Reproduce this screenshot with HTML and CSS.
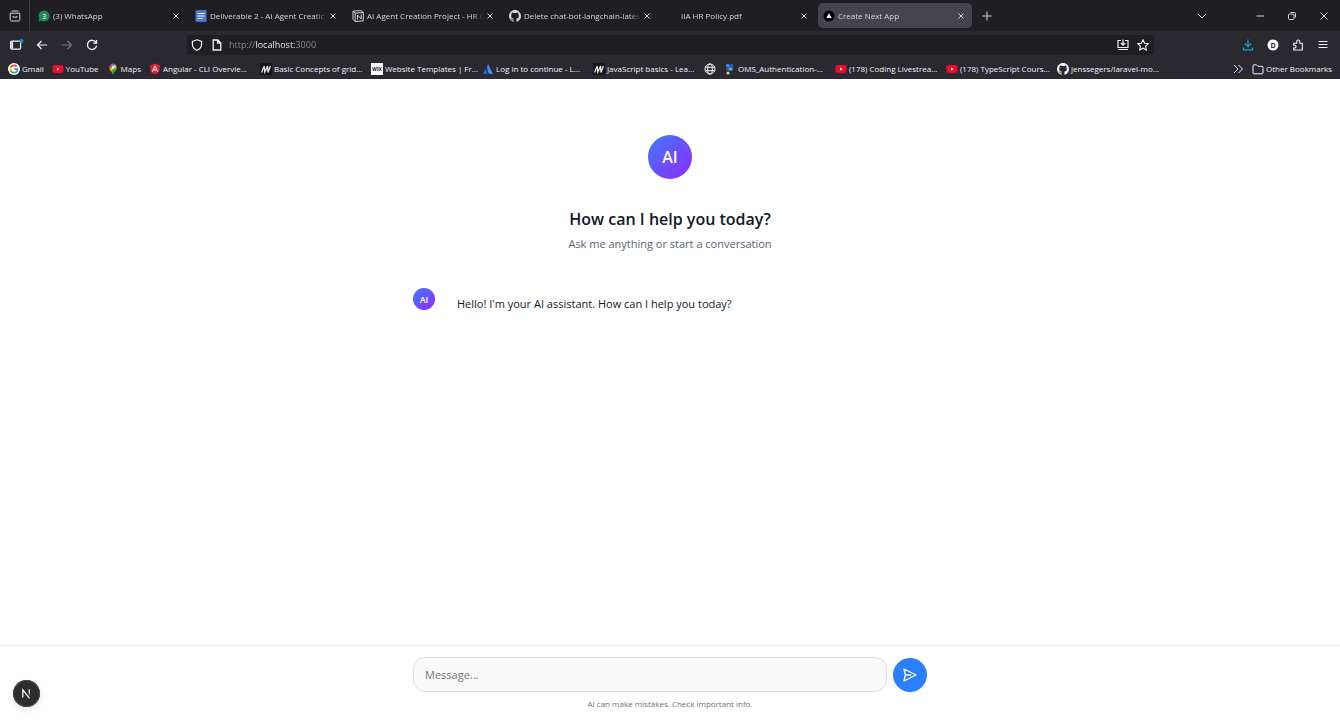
FILE: index.html
```html
<!DOCTYPE html>
<html lang="en">
<head>
    <meta charset="UTF-8">
    <meta name="viewport" content="width=device-width, initial-scale=1.0">
    <title>Create Next App</title>
    <link rel="stylesheet" href="styles.css">
</head>
<body>
    <!-- shared icons -->
    <svg class="sprite" aria-hidden="true">
        <symbol id="close" viewBox="0 0 12 12"><path d="M3.5 3.5l5 5M8.5 3.5l-5 5" /></symbol>
        <symbol id="youtube" viewBox="0 0 12 12"><rect x="0.5" y="2" width="11" height="8" rx="2" fill="#f00a2c" stroke="none" /><path d="M5 4.4v3.2L7.6 6z" fill="#fff" stroke="none" /></symbol>
        <symbol id="mdn" viewBox="0 0 12 12"><rect width="12" height="12" fill="#17171b" stroke="none" /><path d="M1.6 9.5L4.2 3l.6 6.2L7.6 3l.4 6.5L10.4 3" stroke="#eee" stroke-width="1.2" /></symbol>
        <symbol id="github" viewBox="0 0 16 16"><path stroke="none" fill="currentColor" d="M8 0C3.58 0 0 3.58 0 8c0 3.54 2.29 6.53 5.47 7.59.4.07.55-.17.55-.38 0-.19-.01-.82-.01-1.49-2.01.37-2.53-.49-2.69-.94-.09-.23-.48-.94-.82-1.13-.28-.15-.68-.52-.01-.53.63-.01 1.08.58 1.23.82.72 1.21 1.87.87 2.33.66.07-.52.28-.87.51-1.07-1.78-.2-3.64-.89-3.64-3.95 0-.87.31-1.59.82-2.15-.08-.2-.36-1.02.08-2.12 0 0 .67-.21 2.2.82.64-.18 1.32-.27 2-.27s1.36.09 2 .27c1.53-1.04 2.2-.82 2.2-.82.44 1.1.16 1.92.08 2.12.51.56.82 1.27.82 2.15 0 3.07-1.87 3.75-3.65 3.95.29.25.54.73.54 1.48 0 1.07-.01 1.93-.01 2.2 0 .21.15.46.55.38A8.01 8.01 0 0016 8c0-4.42-3.58-8-8-8z" /></symbol>
    </svg>

    <header class="browser">
        <div class="tab-bar">
            <button class="view-btn" aria-label="Recent browsing">
                <svg class="icon" viewBox="0 0 12 12"><path d="M2.5 1h7M1.2 3.2h9.6M1.2 3.2v6.3q0 1.5 1.5 1.5h6.6q1.5 0 1.5-1.5V3.2M4.2 6v1.2h3.6V6" /></svg>
            </button>
            <div class="tabs">
                <div class="tab">
                    <svg class="icon" viewBox="0 0 12 12"><path d="M6 .5a5.5 5.5 0 1 1-2.8 10.2L.5 11.5l.8-2.8A5.5 5.5 0 0 1 6 .5z" fill="#1f8a54" stroke="none" /><text class="badge-num" x="6" y="8.7">3</text></svg>
                    <button class="tab-title">(3) WhatsApp</button>
                    <button class="tab-close" aria-label="Close tab"><svg class="icon"><use href="#close" /></svg></button>
                </div>
                <div class="tab">
                    <svg class="icon" viewBox="0 0 12 12"><rect x="0.5" width="11" height="12" rx="1" fill="#4a76d0" stroke="none" /><path d="M2.5 3.5h7M2.5 6h7M2.5 8.5h5" stroke="#fff" /></svg>
                    <button class="tab-title">Deliverable 2 - AI Agent Creatic</button>
                    <button class="tab-close" aria-label="Close tab"><svg class="icon"><use href="#close" /></svg></button>
                </div>
                <div class="tab">
                    <svg class="icon" viewBox="0 0 12 12"><path d="M1 1.2l7.8-.6 2.5 1.9v8.3l-8.1.7L1 9.3z" /><path d="M1 1.2l2.2 2 8.1-.6M3.2 3.2v8.3" /><path d="M5.5 9.500V5l3.700 4V4.500" /></svg>
                    <button class="tab-title">AI Agent Creation Project - HR C</button>
                    <button class="tab-close" aria-label="Close tab"><svg class="icon"><use href="#close" /></svg></button>
                </div>
                <div class="tab">
                    <svg class="icon"><use href="#github" /></svg>
                    <button class="tab-title">Delete chat-bot-langchain-lates</button>
                    <button class="tab-close" aria-label="Close tab"><svg class="icon"><use href="#close" /></svg></button>
                </div>
                <div class="tab">
                    <span class="icon"></span>
                    <button class="tab-title">IIA HR Policy.pdf</button>
                    <button class="tab-close" aria-label="Close tab"><svg class="icon"><use href="#close" /></svg></button>
                </div>
                <div class="tab active">
                    <svg class="icon" viewBox="0 0 12 12"><circle cx="6" cy="6" r="5.5" fill="#000" stroke="none" /><path d="M6 3.3L8.700 8H3.300z" fill="#fff" stroke="none" /></svg>
                    <button class="tab-title">Create Next App</button>
                    <button class="tab-close" aria-label="Close tab"><svg class="icon"><use href="#close" /></svg></button>
                </div>
                <button class="new-tab" aria-label="New tab"><svg class="icon" viewBox="0 0 12 12"><path d="M6 1.5v9M1.5 6h9" /></svg></button>
            </div>
            <div class="window-controls">
                <button class="list-tabs" aria-label="List all tabs"><svg class="icon" viewBox="0 0 12 12"><path d="M2 4l4 4 4-4" /></svg></button>
                <button aria-label="Minimize"><svg class="icon" viewBox="0 0 12 12"><path d="M2.5 6h7.500" /></svg></button>
                <button aria-label="Restore"><svg class="icon" viewBox="0 0 12 12"><rect x="2.5" y="4" width="5.5" height="5.5" rx="1" /><path d="M4.5 2.5h4q1 0 1 1v4" /></svg></button>
                <button aria-label="Close"><svg class="icon" viewBox="0 0 12 12"><path d="M2.5 2.5l7 7M9.5 2.5l-7 7" /></svg></button>
            </div>
        </div>

        <div class="nav-bar">
            <div class="nav-buttons">
                <button aria-label="Sidebar"><svg class="icon wide" viewBox="0 0 15 12"><rect x="1.6" y="2.1" width="10" height="8" rx="1.200" stroke-width="1.2" /><path d="M3.200 3v6.500" stroke-width="1.800" /><circle cx="12.500" cy="2" r="2" fill="#1693e0" stroke="none" /></svg></button>
                <button aria-label="Back"><svg class="icon" viewBox="0 0 12 12"><path d="M11 6H1.5M5.500 2l-4 4 4 4" stroke-width="1.2" /></svg></button>
                <button class="disabled" aria-label="Forward" disabled><svg class="icon" viewBox="0 0 12 12"><path d="M1 6h9.5M6.5 2l4 4-4 4" stroke-width="1.2" /></svg></button>
                <button aria-label="Reload"><svg class="icon" viewBox="0 0 12 12"><path d="M10 3.5A4.600 4.600 0 1 0 10.600 6.500M10.500 1v3.200H7.300" stroke-width="1.3" /></svg></button>
            </div>
            <div class="url-bar">
                <svg class="icon" viewBox="0 0 12 12"><path d="M6 .8l4.600 1.700v2.700c0 2.800-1.800 5-4.600 6.100-2.800-1.100-4.600-3.300-4.600-6.100V2.500z" stroke-width="1.2" /></svg>
                <svg class="icon" viewBox="0 0 12 12"><path d="M2.200 1h4.600l3 3v7H2.200zM6.600 1v3.200h3.200" stroke-width="1.3" /></svg>
                <input class="url" type="text" aria-label="Address" value="http://localhost:3000">
                <button aria-label="Install"><svg class="icon" viewBox="0 0 12 12"><path d="M4 1.500H1v7h10v-7H8M6 .5v5.500M3.800 4L6 6.200 8.200 4M1 10.500h10" stroke-width="1.2" /></svg></button>
                <button aria-label="Bookmark"><svg class="icon" viewBox="0 0 12 12"><path d="M6 .8l1.600 3.400 3.700.5-2.700 2.600.7 3.700L6 9.200 2.700 11l.7-3.700L.7 4.700l3.700-.5z" stroke-width="1.1" /></svg></button>
            </div>
            <div class="nav-tools">
                <button class="download" aria-label="Downloads"><svg class="icon" viewBox="0 0 12 12"><path d="M6 .5v7M2.800 4.500L6 7.700l3.200-3.200M1.500 8.500v2.300h9V8.500" stroke-width="1.2" /></svg></button>
                <button aria-label="Account"><svg class="icon" viewBox="0 0 12 12"><circle cx="6" cy="6" r="5.5" fill="#fff" stroke="none" /><text class="account-letter" x="6" y="8.500">D</text></svg></button>
                <button aria-label="Extensions"><svg class="icon" viewBox="0 0 12 12"><path d="M1.700 4.200h3V2.500a1.500 1.500 0 0 1 3 0v1.700h2.600V11H1.700V9h1.300a1.400 1.400 0 0 0 0-2.700H1.700z" stroke-width="1.1" /></svg></button>
                <button aria-label="Menu"><svg class="icon" viewBox="0 0 12 12"><path d="M1.500 2.500h9M1.500 5.500h9M1.500 8.500h9" /></svg></button>
            </div>
        </div>

        <nav class="bookmarks">
            <a href="#"><svg class="icon" viewBox="0 0 12 12"><circle cx="6" cy="6" r="6" fill="#fff" stroke="none" /><g stroke-width="1.700"><path d="M8.700 3.600A3.600 3.600 0 0 0 2.900 4.200" stroke="#ea4335" /><path d="M2.900 4.200a3.600 3.600 0 0 0 0 3.600" stroke="#fbbc05" /><path d="M2.900 7.800a3.600 3.600 0 0 0 5.400 1" stroke="#34a853" /><path d="M8.300 8.800a3.600 3.600 0 0 0 1.300-2.700H6.200" stroke="#4285f4" /></g></svg>Gmail</a>
            <a href="#"><svg class="icon"><use href="#youtube" /></svg>YouTube</a>
            <a href="#"><svg class="icon" viewBox="0 0 12 12"><g stroke="none"><path d="M6 .5A3.900 3.900 0 0 0 3 2l3 2.500L8.500 1.500A4 4 0 0 0 6 .5z" fill="#4285f4" /><path d="M3 2a4 4 0 0 0-.6 4L6 4.500z" fill="#ea4335" /><path d="M8.500 1.500L2.400 6l1.500 2.200L9.900 4.500z" fill="#fbbc05" /><path d="M9.900 4.300L4 8.300 6 11.800c.8-3 4.100-4.100 3.900-7.500z" fill="#34a853" /><circle cx="6" cy="4.400" r="1.300" fill="#fff" /></g></svg>Maps</a>
            <a class="long" href="#"><svg class="icon" viewBox="0 0 12 12"><path d="M6 .5l5 1.800-.8 7L6 11.600 1.800 9.300l-.8-7z" fill="#dd1f35" stroke="none" /><path d="M3.400 8.700L6 2.800l2.600 5.900M4.500 6.900h3" stroke="#fff" /></svg>Angular - CLI Overvie...</a>
            <a class="long" href="#"><svg class="icon"><use href="#mdn" /></svg>Basic Concepts of grid...</a>
            <a class="long" href="#"><svg class="icon" viewBox="0 0 12 12"><rect width="12" height="12" fill="#fff" stroke="none" /><text class="wix" x="6" y="7.800">WIX</text></svg>Website Templates | Fr...</a>
            <a class="long" href="#"><svg class="icon" viewBox="0 0 12 12"><path d="M3.600 5.500l2 5.500H1z" fill="#2368dc" stroke="none" /><path d="M6 1l5 10H7.200C5.200 8 4.500 4.500 6 1z" fill="#3c8cff" stroke="none" /></svg>Log in to continue - L...</a>
            <a class="long" href="#"><svg class="icon"><use href="#mdn" /></svg>JavaScript basics - Lea...</a>
            <a href="#" aria-label="Website"><svg class="icon" viewBox="0 0 12 12"><circle cx="6" cy="6" r="5" /><ellipse cx="6" cy="6" rx="2.300" ry="5" /><path d="M1.300 4.300h9.400M1.300 7.700h9.400" /></svg></a>
            <a class="long" href="#"><svg class="icon" viewBox="0 0 12 12"><g stroke="none"><rect x="2" y="1" width="3.5" height="3.5" rx="1" fill="#3b8ae8" /><rect x="6" y="1" width="3.5" height="3.5" rx="1" fill="#1e5fb4" /><rect x="4.5" y="4.5" width="4" height="3" fill="#5ab0f5" /><rect x="2" y="5" width="2.5" height="2.5" fill="#1e5fb4" /><circle cx="4" cy="10" r="1.600" fill="#f4d06a" /></g></svg>OMS_Authentication-...</a>
            <a class="long" href="#"><svg class="icon"><use href="#youtube" /></svg>(178) Coding Livestrea...</a>
            <a class="long" href="#"><svg class="icon"><use href="#youtube" /></svg>(178) TypeScript Cours...</a>
            <a class="long" href="#"><svg class="icon"><use href="#github" /></svg>jenssegers/laravel-mo...</a>
            <button class="more" aria-label="More bookmarks"><svg class="icon" viewBox="0 0 12 12"><path d="M2 2l4 4-4 4M6.500 2l4 4-4 4" /></svg></button>
            <a href="#"><svg class="icon" viewBox="0 0 12 12"><path d="M1 10V2.800q0-1 1-1h2.500L6 3.300h4q1 0 1 1V10q0 .8-.8.800H1.800Q1 10.800 1 10z" /></svg>Other Bookmarks</a>
        </nav>
    </header>

    <main class="chat">
        <section class="welcome">
            <div class="avatar large">AI</div>
            <h1>How can I help you today?</h1>
            <p>Ask me anything or start a conversation</p>
        </section>
        <div class="message">
            <div class="avatar">AI</div>
            <p>Hello! I'm your AI assistant. How can I help you today?</p>
        </div>
    </main>

    <footer class="composer">
        <form class="composer-form">
            <input type="text" placeholder="Message..." aria-label="Message">
            <button type="submit" class="send" aria-label="Send">
                <svg viewBox="0 0 24 24"><path d="M12 19l9 2-9-18-9 18 9-2zm0 0v-8" transform="rotate(90 12 12)" /></svg>
            </button>
        </form>
        <p class="note">AI can make mistakes. Check important info.</p>
    </footer>

    <button class="dev-badge" aria-label="Open Next.js Dev Tools">
        <svg viewBox="0 0 27 27"><defs><linearGradient id="fade" x1="0" y1="0" x2="0" y2="1"><stop offset="0.4" stop-color="#fff" /><stop offset="1" stop-color="#fff" stop-opacity="0" /></linearGradient></defs><path d="M9.800 17.500V9.800l6.700 8.500" /><rect x="15.700" y="9.300" width="1.200" height="7" fill="url(#fade)" stroke="none" /></svg>
    </button>
</body>
</html>
```
FILE: styles.css
```css
* {
    box-sizing: border-box;
}
body {
    margin: 0;
    min-height: 100vh;
    display: flex;
    flex-direction: column;
    font-family: "Open Sans", "Noto Sans", sans-serif;
    background: #fff;
    color: #101828;
}
button, input {
    font: inherit;
    color: inherit;
    border: none;
    background: none;
    padding: 0;
}
button {
    display: flex;
    align-items: center;
    justify-content: center;
    cursor: pointer;
}
a {
    color: inherit;
    text-decoration: none;
}
h1, p {
    margin: 0;
}
.sprite {
    display: none;
}
.icon {
    flex: none;
    width: 12px;
    height: 12px;
    fill: none;
    stroke: currentColor;
    stroke-width: 1;
}
.icon.wide {
    width: 15px;
}

/* browser bars */
.browser {
    background: #2a2930;
    color: #f2f2f6;
    font-size: 8px;
    line-height: 12px;
}
.tab-bar {
    display: flex;
    align-items: center;
    height: 32px;
    background: #1e1e23;
    color: #d6d6da;
    border-bottom: 1px solid #2a2930;
}
.view-btn {
    flex: none;
    width: 30px;
    align-self: stretch;
    border-right: 1px solid #3b3b41;
}
.tabs {
    flex: 1;
    min-width: 0;
    display: flex;
    align-items: center;
    gap: 3px;
    padding-left: 3px;
}
.tab {
    flex: 0 1 154px;
    min-width: 0;
    height: 25px;
    display: flex;
    align-items: center;
    padding: 0 5px;
    border-radius: 5px;
}
.tab.active {
    background: #45444d;
}
.tab-title {
    flex: 1;
    min-width: 0;
    display: block;
    margin-left: 3px;
    text-align: left;
    white-space: nowrap;
    overflow: hidden;
    mask-image: linear-gradient(to left, transparent, #000 12px);
}
.new-tab {
    width: 24px;
    height: 24px;
}
.window-controls {
    display: flex;
}
.window-controls button {
    width: 32px;
    height: 24px;
}
.window-controls .list-tabs {
    margin-right: 26px;
}
.badge-num, .account-letter, .wix {
    text-anchor: middle;
    stroke: none;
    fill: #fff;
    font-size: 7px;
}
.account-letter {
    fill: #222;
    font-weight: 700;
}
.wix {
    fill: #111;
    font-size: 5px;
    font-weight: 700;
}
.nav-bar {
    display: flex;
    align-items: center;
    height: 26px;
}
.nav-buttons, .nav-tools {
    flex: none;
    display: flex;
}
.nav-buttons {
    padding-left: 4px;
}
.nav-buttons button, .nav-tools button {
    width: 25px;
    height: 20px;
}
.nav-buttons .disabled {
    color: #77767e;
}
.nav-tools {
    padding-right: 5px;
}
.nav-tools .download {
    color: #17a7bd;
}
.url-bar {
    flex: 1;
    display: flex;
    align-items: center;
    gap: 8px;
    height: 20px;
    margin: 0 81px 0 83px;
    padding: 0 5px 0 4px;
    border-radius: 3px;
    background: #1e1e23;
}
.url {
    flex: 1;
    min-width: 0;
    margin-left: -2px;
    font-size: 9px;
    color: transparent;
    /* dim the protocol and port, keep the host bright */
    background: linear-gradient(to right, #8e8d96 27px, #fbfbfe 27px, #fbfbfe 66px, #8e8d96 66px);
    background-clip: text;
}
.bookmarks {
    display: flex;
    align-items: center;
    gap: 8px;
    height: 21px;
    padding: 0 8px;
    overflow: hidden;
}
.bookmarks a {
    flex: none;
    display: flex;
    align-items: center;
    gap: 2px;
    white-space: nowrap;
}
.bookmarks .long {
    width: 103px;
}
.bookmarks .more {
    margin-left: auto;
}

/* chat */
.chat {
    flex: 1;
    width: 100%;
    max-width: 514px;
    margin: 0 auto;
    padding-top: 56px;
}
.welcome {
    display: flex;
    flex-direction: column;
    align-items: center;
    text-align: center;
}
.avatar {
    flex: none;
    display: flex;
    align-items: center;
    justify-content: center;
    width: 22px;
    height: 22px;
    border-radius: 50%;
    background: linear-gradient(135deg, #3f7bff, #9029fa);
    color: #fff;
    font-size: 9px;
    font-weight: 600;
}
.avatar.large {
    width: 44px;
    height: 44px;
    font-size: 16px;
}
.welcome h1 {
    margin-top: 28px;
    font-size: 16px;
    line-height: 24px;
    font-weight: 600;
}
.welcome p {
    margin-top: 4px;
    font-size: 11px;
    line-height: 18px;
    color: #5a6472;
}
.message {
    display: flex;
    gap: 22px;
    margin-top: 35px;
}
.message p {
    padding-top: 7px;
    font-size: 11px;
    line-height: 18px;
}
.composer {
    padding: 11px 16px 10px;
    border-top: 1px solid #e5e7eb;
}
.composer-form {
    display: flex;
    align-items: flex-end;
    gap: 6px;
    max-width: 514px;
    margin: 0 auto;
}
.composer-form input {
    flex: 1;
    min-width: 0;
    height: 35px;
    padding: 0 11px;
    border: 1px solid #dcdee2;
    border-radius: 12px;
    background: #fafafa;
    font-size: 11px;
}
.composer-form input::placeholder {
    color: #757575;
}
.send {
    width: 34px;
    height: 34px;
    border-radius: 50%;
    background: #2b7fff;
}
.send svg {
    width: 16px;
    height: 16px;
    fill: none;
    stroke: #fff;
    stroke-width: 2;
    stroke-linecap: round;
    stroke-linejoin: round;
}
.note {
    margin-top: 6px;
    font-size: 8px;
    line-height: 12px;
    text-align: center;
    color: #6a7282;
}
.dev-badge {
    position: fixed;
    left: 13px;
    bottom: 13px;
    width: 27px;
    height: 27px;
    border-radius: 50%;
    background: #2d2d2d;
    box-shadow: inset 0 0 0 1px #4a4a4a, 0 3px 8px rgba(0, 0, 0, 0.1);
}
.dev-badge svg {
    width: 27px;
    height: 27px;
    fill: none;
    stroke: #fff;
    stroke-width: 1.2;
}
```
